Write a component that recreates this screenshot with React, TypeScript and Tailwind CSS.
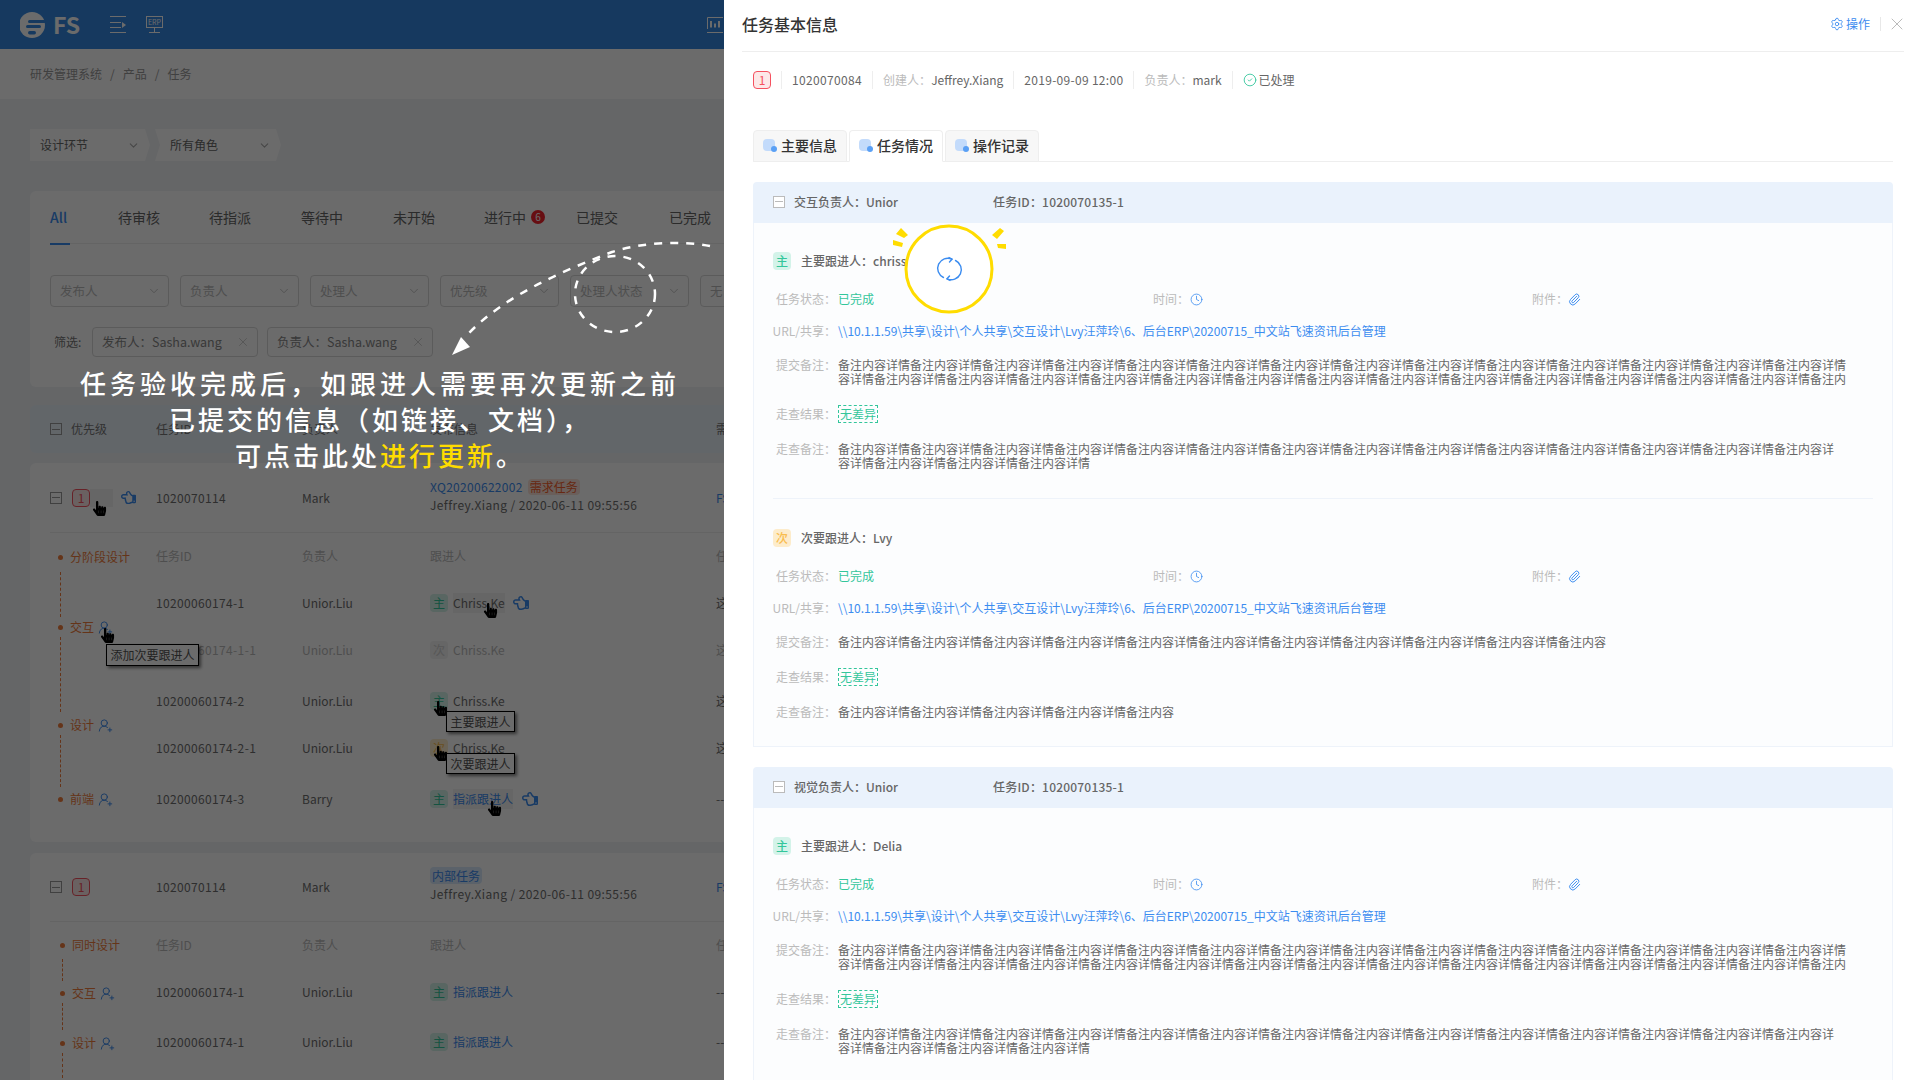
import { ReactNode } from 'react';
import { ChevronDown, Clock, Paperclip, Settings, UserRoundPlus, X, CircleCheck } from 'lucide-react';
import { FaHandPointer, FaRegHandPointLeft } from 'react-icons/fa';

const NOTE = '备注内容详情';
const LINE_A = NOTE.repeat(14);
const LINE_B = '容详情' + NOTE.repeat(13) + '备注内';
const LINE_C = NOTE.repeat(13) + '备注内容详';
const LINE_D = '容详情' + NOTE.repeat(3);
const URL_TEXT = '\\\\10.1.1.59\\共享\\设计\\个人共享\\交互设计\\Lvy汪萍玲\\6、后台ERP\\20200715_中文站飞速资讯后台管理';

function Cursor({ className }: { className: string }) {
  return <FaHandPointer className={`absolute z-10 text-black ${className}`} size={15} />;
}

function Tip({ text, className }: { text: string; className: string }) {
  return (
    <div className={`absolute z-10 flex items-center justify-center bg-white border border-black text-xs text-[#555] shadow-[2px_2px_3px_rgba(0,0,0,0.5)] ${className}`}>
      {text}
    </div>
  );
}

function FollowTag({ type }: { type: 'main' | 'sub' | 'none' }) {
  if (type === 'main') {
    return <span className="flex h-[18px] w-[18px] items-center justify-center rounded-sm bg-[#d3f3e9] text-xs text-[#33c69b]">主</span>;
  }
  if (type === 'sub') {
    return <span className="flex h-[18px] w-[18px] items-center justify-center rounded-sm bg-[#fdeccb] text-xs text-[#f9bd4f]">次</span>;
  }
  return <span className="flex h-[18px] w-[18px] items-center justify-center rounded-sm bg-[#f2f2f2] text-xs text-[#cfcfcf]">次</span>;
}

function SubRow({ id, owner, children, last, height, faded }: { id: string; owner: string; children: ReactNode; last: string; height: string; faded?: boolean }) {
  return (
    <div className={`grid grid-cols-[146px_128px_286px_100px] items-center text-xs ${height} ${faded ? 'text-[#bbb]' : 'text-[#6e6e6e]'}`}>
      <span className="tracking-[0.35px]">{id}</span>
      <span>{owner}</span>
      <div className="flex items-center gap-[5px]">{children}</div>
      <span className="whitespace-nowrap">{last}</span>
    </div>
  );
}

function SubHead({ height }: { height: string }) {
  return (
    <div className={`grid grid-cols-[146px_128px_286px_100px] items-center text-xs text-[#bbb] ${height}`}>
      <span>任务ID</span>
      <span>负责人</span>
      <span>跟进人</span>
      <span>任</span>
    </div>
  );
}

function Stage({ label, add }: { label: string; add?: boolean }) {
  return (
    <div className="flex h-5 items-center whitespace-nowrap text-xs text-[#f07d3c]">
      <span className="mr-[7px] h-[5px] w-[5px] shrink-0 rounded-full bg-[#f07d3c]" />
      <span>{label}</span>
      {add && <UserRoundPlus size={15} strokeWidth={1.5} className="ml-[4px] text-[#3b8cf0]" />}
    </div>
  );
}

function StageLine({ height, mt }: { height: string; mt: string }) {
  return <div className={`ml-[2px] w-0 border-l border-dashed border-[#f07d3c] ${height} ${mt}`} />;
}

function Box({ tone }: { tone: string }) {
  return (
    <span className={`flex h-3 w-3 shrink-0 items-center justify-center border ${tone}`}>
      <span className="h-px w-[8px] bg-current" />
    </span>
  );
}

function Filter({ label }: { label: string }) {
  return (
    <div className="flex h-8 w-[119px] shrink-0 items-center justify-between rounded-sm border border-[#d9d9d9] pl-[9px] pr-[7px] text-[#bbb]">
      <span className="text-[12.5px]">{label}</span>
      <ChevronDown size={14} strokeWidth={1.5} />
    </div>
  );
}

function ChosenTag({ label }: { label: string }) {
  return (
    <div className="flex h-[30px] w-[166px] items-center justify-between rounded-sm border border-[#d9d9d9] pl-[9px] pr-[7px] text-[#888]">
      <span className="text-[12.5px]">{label}</span>
      <X size={14} strokeWidth={1.2} className="text-[#bbb]" />
    </div>
  );
}

function PriorityBadge() {
  return (
    <span className="ml-[10px] flex h-[18px] w-[18px] items-center justify-center rounded-sm border border-[#f5515f] bg-[#fde8e8] text-[#f5515f]">1</span>
  );
}

function LeftPanel() {
  return (
    <div className="relative h-[1080px] w-[724px] shrink-0 overflow-hidden bg-[#f1f3f6]">
      <header className="flex h-[49px] items-center justify-between bg-[#3589e3] pl-[20px]">
        <div className="flex items-center">
          <svg width="26" height="28" viewBox="0 0 26 28" className="text-white">
            <circle cx="12" cy="14" r="13" fill="currentColor" />
            <rect x="8" y="9" width="18" height="3" rx="1.5" fill="#3589e3" />
            <rect x="6" y="14" width="15" height="3" rx="1.5" fill="#3589e3" />
            <rect x="8" y="20" width="8" height="3.5" rx="1.7" fill="#3589e3" />
          </svg>
          <span className="ml-[7px] text-[23px] leading-none font-semibold text-white">FS</span>
          <svg width="17" height="17" viewBox="0 0 17 17" fill="none" stroke="white" className="ml-[30px]">
            <path d="M0 .5H16M0 6.5H11M0 11.5H11M0 16.5H16" />
            <path d="M12 6L16 9L12 12Z" fill="white" stroke="none" />
          </svg>
          <svg width="17" height="17" viewBox="0 0 17 17" fill="none" stroke="white" className="ml-[19px]">
            <rect x=".5" y=".5" width="16" height="11" />
            <path d="M8.5 12V16M3 16.5H14" />
            <text x="2" y="9" fontSize="7" fill="white" stroke="none">ERP</text>
          </svg>
        </div>
        <svg width="16" height="16" viewBox="0 0 16 16" fill="none" className="mr-[1px]">
          <path d="M.5 12V.5H16M0 15.5H16" stroke="white" />
          <path d="M4 4V10.5M8 6.5V10.5M12 4V10.5" stroke="white" strokeWidth="2" />
        </svg>
      </header>

      <div className="flex h-[50px] items-center bg-white pl-[30px] text-xs text-[#999]">
        <span>研发管理系统</span>
        <span className="mx-[8px]">/</span>
        <span>产品</span>
        <span className="mx-[8px]">/</span>
        <span>任务</span>
      </div>

      <div className="px-[30px] pt-[30px]">
        <div className="flex h-8 text-xs text-[#666]">
          <div className="flex w-[120px] items-center justify-between bg-white pl-[10px] pr-[10px] [clip-path:polygon(0_0,calc(100%-5px)_0,100%_50%,calc(100%-5px)_100%,0_100%)]">
            <span>设计环节</span>
            <ChevronDown size={13} className="text-[#aaa]" />
          </div>
          <div className="ml-[5px] flex w-[126px] items-center justify-between bg-white pl-[15px] pr-[10px] [clip-path:polygon(0_0,calc(100%-5px)_0,100%_50%,calc(100%-5px)_100%,0_100%,5px_50%)]">
            <span>所有角色</span>
            <ChevronDown size={13} className="text-[#aaa]" />
          </div>
        </div>

        <div className="mt-[30px] h-[196px] w-[720px] rounded-md bg-white pl-[20px]">
          <div className="flex h-[53px] items-center border-b border-[#eee] text-sm text-[#666]">
            <span className="relative flex h-[53px] w-[68px] items-center font-medium text-[#3b8cf0]">
              All
              <span className="absolute bottom-[-1px] left-0 h-[2px] w-5 bg-[#3b8cf0]" />
            </span>
            <span className="w-[91px]">待审核</span>
            <span className="w-[92px]">待指派</span>
            <span className="w-[92px]">等待中</span>
            <span className="w-[91px]">未开始</span>
            <span className="flex w-[92px] items-center">
              进行中
              <span className="ml-[5px] flex h-[14px] w-[14px] items-center justify-center rounded-full bg-[#f5222d] text-[10px] text-white">6</span>
            </span>
            <span className="w-[93px]">已提交</span>
            <span className="w-[50px] whitespace-nowrap">已完成</span>
          </div>
          <div className="mt-[31px] flex gap-[11px]">
            <Filter label="发布人" />
            <Filter label="负责人" />
            <Filter label="处理人" />
            <Filter label="优先级" />
            <Filter label="处理人状态" />
            <Filter label="无" />
          </div>
          <div className="mt-[20px] flex items-center">
            <span className="ml-[4px] w-[38px] text-xs text-[#777]">筛选:</span>
            <ChosenTag label="发布人：Sasha.wang" />
            <div className="w-[9px]" />
            <ChosenTag label="负责人：Sasha.wang" />
          </div>
        </div>

        <div className="mt-[18px] grid h-[48px] w-[720px] grid-cols-[106px_146px_128px_286px_40px] items-center rounded-md bg-[#eaf3fb] pl-[20px] text-xs text-[#777]">
          <div className="flex items-center gap-[9px]"><Box tone="border-[#999] text-[#999]" /><span>优先级</span></div>
          <span>任务ID</span>
          <span>负责人</span>
          <span>发布信息</span>
          <span>需</span>
        </div>

        <div className="relative mt-[10px] h-[379px] w-[720px] rounded-md bg-white pl-[20px]">
          <div className="grid h-[70px] grid-cols-[106px_146px_128px_286px_40px] items-center border-b border-[#eee] text-xs text-[#6e6e6e]">
            <div className="flex items-center">
              <Box tone="border-[#999] text-[#999]" />
              <PriorityBadge />
              <span className="h-[18px] w-[23px] bg-[#f2f2f2]" />
              <FaRegHandPointLeft size={15} className="ml-[8px] text-[#3b8cf0]" />
            </div>
            <span className="tracking-[0.35px]">1020070114</span>
            <span>Mark</span>
            <div className="pb-[4px]">
              <div className="flex items-center gap-[5px]">
                <span className="tracking-[0.3px] text-[#3b8cf0]">XQ20200622002</span>
                <span className="rounded-sm bg-[#fde3d8] px-[2px] text-[#f5602c]">需求任务</span>
              </div>
              <div className="mt-[2px] whitespace-nowrap tracking-[0.4px]">Jeffrey.Xiang / 2020-06-11 09:55:56</div>
            </div>
            <span className="text-[#3b8cf0]">FS</span>
          </div>
          <div className="flex">
            <div className="w-[106px] shrink-0 pt-[14px] pl-[8px]">
              <Stage label="分阶段设计" />
              <StageLine height="h-[45px]" mt="mt-[5px]" />
              <Stage label="交互" add />
              <StageLine height="h-[75px]" mt="mt-0" />
              <div className="h-[3px]" />
              <Stage label="设计" add />
              <StageLine height="h-[52px]" mt="mt-0" />
              <div className="h-[2px]" />
              <Stage label="前端" add />
            </div>
            <div className="shrink-0">
              <SubHead height="h-[46px]" />
              <SubRow id="10200060174-1" owner="Unior.Liu" last="这" height="h-[47px]">
                <FollowTag type="main" />
                <span className="bg-[#f2f2f2] leading-[20px]">Chriss.Ke</span>
                <FaRegHandPointLeft size={16} className="ml-[3px] text-[#3b8cf0]" />
              </SubRow>
              <SubRow id="10200060174-1-1" owner="Unior.Liu" last="这" height="h-[48px]" faded>
                <FollowTag type="none" />
                <span>Chriss.Ke</span>
              </SubRow>
              <SubRow id="10200060174-2" owner="Unior.Liu" last="这" height="h-[54px]">
                <FollowTag type="main" />
                <span>Chriss.Ke</span>
              </SubRow>
              <SubRow id="10200060174-2-1" owner="Unior.Liu" last="这" height="h-[40px]">
                <FollowTag type="sub" />
                <span>Chriss.Ke</span>
              </SubRow>
              <SubRow id="10200060174-3" owner="Barry" last="--" height="h-[62px]">
                <FollowTag type="main" />
                <span className="bg-[#f2f2f2] leading-[20px] text-[#3b8cf0]">指派跟进人</span>
                <FaRegHandPointLeft size={16} className="ml-[4px] text-[#3b8cf0]" />
              </SubRow>
            </div>
          </div>
          <Cursor className="left-[62px] top-[38px]" />
          <Cursor className="left-[453px] top-[140px]" />
          <Cursor className="left-[70px] top-[165px]" />
          <Cursor className="left-[403px] top-[238px]" />
          <Cursor className="left-[403px] top-[283px]" />
          <Cursor className="left-[457px] top-[338px]" />
          <Tip text="添加次要跟进人" className="left-[76px] top-[181px] h-[22px] w-[93px]" />
          <Tip text="主要跟进人" className="left-[416px] top-[248px] h-[21px] w-[69px]" />
          <Tip text="次要跟进人" className="left-[416px] top-[290px] h-[21px] w-[69px]" />
        </div>

        <div className="mt-[11px] h-[300px] w-[720px] rounded-md bg-white pl-[20px]">
          <div className="grid h-[69px] grid-cols-[106px_146px_128px_286px_40px] items-center border-b border-[#eee] text-xs text-[#6e6e6e]">
            <div className="flex items-center">
              <Box tone="border-[#999] text-[#999]" />
              <PriorityBadge />
            </div>
            <span className="tracking-[0.35px]">1020070114</span>
            <span>Mark</span>
            <div className="pb-[4px]">
              <span className="rounded-sm bg-[#d8e9fd] px-[2px] text-[#3b8cf0]">内部任务</span>
              <div className="mt-[2px] whitespace-nowrap tracking-[0.4px]">Jeffrey.Xiang / 2020-06-11 09:55:56</div>
            </div>
            <span className="text-[#3b8cf0]">FS</span>
          </div>
          <div className="flex">
            <div className="w-[106px] shrink-0 pt-[13px] pl-[10px]">
              <Stage label="同时设计" />
              <StageLine height="h-[22px]" mt="mt-[4px]" />
              <div className="h-[2px]" />
              <Stage label="交互" add />
              <StageLine height="h-[27px]" mt="mt-0" />
              <div className="h-[3px]" />
              <Stage label="设计" add />
              <StageLine height="h-[25px]" mt="mt-0" />
            </div>
            <div className="shrink-0">
              <SubHead height="h-[46px]" />
              <SubRow id="10200060174-1" owner="Unior.Liu" last="--" height="h-[48px]">
                <FollowTag type="main" />
                <span className="text-[#3b8cf0]">指派跟进人</span>
              </SubRow>
              <SubRow id="10200060174-1" owner="Unior.Liu" last="--" height="h-[52px]">
                <FollowTag type="main" />
                <span className="text-[#3b8cf0]">指派跟进人</span>
              </SubRow>
            </div>
          </div>
        </div>
      </div>

      {/* dim layer plus the annotation that sits on top of it */}
      <div className="absolute inset-0 z-20 bg-black/[0.58]" />
      <svg className="absolute left-0 top-0 z-30" width="724" height="400" fill="none" stroke="white" strokeWidth="2.5" strokeDasharray="8 8">
        <ellipse cx="615" cy="294" rx="40" ry="38" />
        <path d="M710 246C680 240 640 243 612 252C560 272 505 296 469 333" />
        <path d="M461 337L470 347L452 355Z" fill="white" stroke="none" />
      </svg>
      <div className="absolute left-[36px] top-[365px] z-30 w-[688px] text-center text-[26px] leading-[36px] font-medium tracking-[3px] text-white">
        <div className="tracking-[4px]">任务验收完成后，如跟进人需要再次更新之前</div>
        <div>已提交的信息（如链接、文档），</div>
        <div>可点击此处<span className="text-[#ffdc00]">进行更新</span>。</div>
      </div>
    </div>
  );
}

function Field({ label, children, className }: { label: string; children: ReactNode; className?: string }) {
  return (
    <div className={`flex items-start text-xs ${className ?? ''}`}>
      <span className="mr-[2px] w-[66px] shrink-0 whitespace-nowrap text-right leading-[16px] text-[#bbb]">{label}</span>
      <div className="leading-[16px] text-[#666]">{children}</div>
    </div>
  );
}

function Note({ label, lines, className }: { label: string; lines: string[]; className?: string }) {
  return (
    <div className={`flex items-start text-xs ${className ?? ''}`}>
      <span className="mr-[2px] w-[66px] shrink-0 text-right leading-[14px] text-[#bbb]">{label}</span>
      <div className="leading-[14px] text-[#666]">
        {lines.map((line, i) => (
          <div key={i} className="whitespace-nowrap">{line}</div>
        ))}
      </div>
    </div>
  );
}

function Follower(props: { tag: 'main' | 'sub'; title: string; submit: string[]; review: string[]; pt: string; pb: string }) {
  return (
    <div className={`${props.pt} ${props.pb} pl-[16px]`}>
      <div className="ml-[3px] flex h-[18px] items-center text-xs font-medium text-[#666]">
        <FollowTag type={props.tag} />
        <span className="ml-[10px]">{props.title}</span>
      </div>
      <div className="mt-[21px] grid h-4 grid-cols-[383px_379px_100px] text-xs">
        <Field label="任务状态："><span className="text-[#33c69b]">已完成</span></Field>
        <div className="flex items-center text-[#bbb]">
          <span>时间：</span>
          <Clock size={13} strokeWidth={1.5} className="ml-[1px] text-[#3b8cf0]" />
        </div>
        <div className="flex items-center text-[#bbb]">
          <span>附件：</span>
          <Paperclip size={13} strokeWidth={1.8} className="text-[#3b8cf0]" />
        </div>
      </div>
      <Field label="URL/共享：" className="mt-[16px]"><span className="text-[#3b8cf0]">{URL_TEXT}</span></Field>
      <Note label="提交备注：" lines={props.submit} className="mt-[19px]" />
      <div className="mt-[19px] flex items-center text-xs">
        <span className="mr-[2px] w-[66px] text-right text-[#bbb]">走查结果：</span>
        <span className="flex h-[18px] w-10 items-center justify-center border border-dashed border-[#33c69b] text-[#33c69b]">无差异</span>
      </div>
      <Note label="走查备注：" lines={props.review} className="mt-[19px]" />
    </div>
  );
}

function SectionHead({ name }: { name: string }) {
  return (
    <div className="flex h-[41px] items-center rounded-t-sm bg-[#eaf2fc] pb-[2px] pl-[20px] text-xs font-medium text-[#666]">
      <Box tone="border-[#bbb] bg-white text-[#bbb]" />
      <span className="ml-[9px] w-[199px]">{name}</span>
      <span className="tracking-[0.2px]">任务ID：1020070135-1</span>
    </div>
  );
}

function Divider() {
  return <span className="mx-[10px] h-[18px] w-px bg-[#eee]" />;
}

function Drawer() {
  return (
    <div className="relative h-[1080px] w-[1196px] overflow-hidden bg-white">
      <div className="ml-[18px] mr-[16px] flex h-[52px] items-center justify-between border-b border-[#eee] pb-[4px]">
        <span className="text-base font-medium text-[#333]">任务基本信息</span>
        <div className="flex items-center text-xs text-[#3b8cf0]">
          <Settings size={14} strokeWidth={1.5} />
          <span className="ml-[2px]">操作</span>
          <span className="ml-[10px] h-[14px] w-px bg-[#e8e8e8]" />
          <X size={20} strokeWidth={1.2} className="ml-[6px] mr-[-3px] text-[#bbb]" />
        </div>
      </div>

      <div className="ml-[29px] mt-[19px] flex h-[18px] items-center text-xs text-[#666]">
        <span className="flex h-[18px] w-[18px] items-center justify-center rounded-sm border border-[#f5515f] bg-[#fde8e8] text-[#f5515f]">1</span>
        <Divider />
        <span className="tracking-[0.35px]">1020070084</span>
        <Divider />
        <span className="text-[#bbb]">创建人：</span>
        <span>Jeffrey.Xiang</span>
        <Divider />
        <span className="tracking-[0.3px]">2019-09-09 12:00</span>
        <Divider />
        <span className="text-[#bbb]">负责人：</span>
        <span>mark</span>
        <Divider />
        <CircleCheck size={14} strokeWidth={1.5} className="text-[#33c69b]" />
        <span className="ml-[2px]">已处理</span>
      </div>

      <div className="ml-[29px] mr-[27px] mt-[41px] flex h-8 gap-[2px] border-b border-[#eee] text-sm font-medium text-[#333]">
        {['主要信息', '任务情况', '操作记录'].map((label, i) => (
          <div
            key={label}
            className={`flex h-8 w-[94px] items-center rounded-t-sm border border-[#eee] pl-[9px] pb-[2px] ${i === 1 ? 'border-b-white bg-white' : 'bg-[#f7f7f7]'}`}
          >
            <span className="relative mr-[4px] h-3 w-[14px]">
              <span className="absolute left-0 top-0 h-3 w-3 rounded-sm bg-[#c3dbfb]" />
              <span className="absolute bottom-[-1px] right-0 h-[6px] w-[6px] rounded-full bg-[#5aa0f5]" />
            </span>
            {label}
          </div>
        ))}
      </div>

      <div className="ml-[29px] mr-[27px] mt-[20px]">
        <SectionHead name="交互负责人：Unior" />
        <div className="h-[524px] border border-t-0 border-[#eef3fa] bg-[#fcfdfe]">
          <Follower tag="main" title="主要跟进人：chriss.Ke" submit={[LINE_A, LINE_B]} review={[LINE_C, LINE_D]} pt="pt-[29px]" pb="pb-[28px]" />
          <div className="ml-[19px] mr-[19px] h-px bg-[#eef3fa]" />
          <Follower
            tag="sub"
            title="次要跟进人：Lvy"
            submit={[NOTE.repeat(10) + '备注内容']}
            review={[NOTE.repeat(4) + '备注内容']}
            pt="pt-[30px]"
            pb="pb-[29px]"
          />
        </div>
        <div className="mt-[20px]">
          <SectionHead name="视觉负责人：Unior" />
          <div className="border border-t-0 border-[#eef3fa] bg-[#fcfdfe]">
            <Follower tag="main" title="主要跟进人：Delia" submit={[LINE_A, LINE_B]} review={[LINE_C, LINE_D]} pt="pt-[29px]" pb="pb-[29px]" />
          </div>
        </div>
      </div>

      <svg className="absolute left-[166px] top-[220px]" width="120" height="100" viewBox="0 0 120 100" fill="none">
        <circle cx="59" cy="49" r="43" fill="white" stroke="#ffdc00" strokeWidth="3" />
        <path d="M6 14L11 8L18 15L14 18Z M3 20L13 23L12 27L3 25Z" fill="#ffdc00" />
        <path d="M102 15L110 8L114 11L107 19Z M107 24L116 24L116 29L108 28Z" fill="#ffdc00" />
        <g transform="translate(47.5 37)" stroke="#3b8cf0" strokeWidth="1.4" strokeLinecap="round">
          <path d="M14.5 2.2A10 10 0 0 0 6 20.5" />
          <path d="M14.5 2.2L11.5 .6M14.5 2.2L12 5" />
          <path d="M9.5 21.8A10 10 0 0 0 18 3.5" />
          <path d="M9.5 21.8L12.5 23.4M9.5 21.8L12 19" />
        </g>
      </svg>
    </div>
  );
}

export default function App() {
  return (
    <div className="flex h-[1080px] w-[1920px] overflow-hidden font-['Noto_Sans_CJK_SC',sans-serif]">
      <LeftPanel />
      <Drawer />
    </div>
  );
}
